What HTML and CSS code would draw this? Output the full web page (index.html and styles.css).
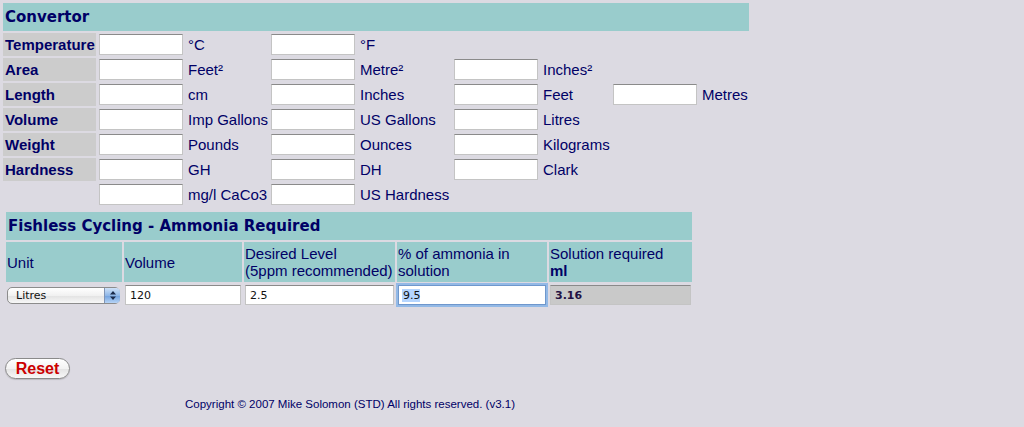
FILE: index.html
```html
<!DOCTYPE html>
<html lang="en">
<head>
    <meta charset="UTF-8">
    <title>Convertor</title>
    <link rel="stylesheet" href="styles.css">
</head>
<body>
    <!-- Unit convertor -->
    <table class="convertor">
        <colgroup>
            <col class="c-label"><col class="c-input"><col class="c-unit1">
            <col class="c-input"><col class="c-unit2"><col class="c-input">
            <col class="c-unit3"><col class="c-input"><col class="c-unit4">
        </colgroup>
        <tr class="title-row"><th colspan="9">Convertor</th></tr>
        <tr>
            <td class="label">Temperature</td>
            <td><input type="text" class="field"></td><td class="unit">°C</td>
            <td><input type="text" class="field"></td><td class="unit">°F</td>
            <td></td><td></td><td></td><td></td>
        </tr>
        <tr>
            <td class="label">Area</td>
            <td><input type="text" class="field"></td><td class="unit">Feet²</td>
            <td><input type="text" class="field"></td><td class="unit">Metre²</td>
            <td><input type="text" class="field"></td><td class="unit">Inches²</td>
            <td></td><td></td>
        </tr>
        <tr>
            <td class="label">Length</td>
            <td><input type="text" class="field"></td><td class="unit">cm</td>
            <td><input type="text" class="field"></td><td class="unit">Inches</td>
            <td><input type="text" class="field"></td><td class="unit">Feet</td>
            <td><input type="text" class="field"></td><td class="unit">Metres</td>
        </tr>
        <tr>
            <td class="label">Volume</td>
            <td><input type="text" class="field"></td><td class="unit">Imp Gallons</td>
            <td><input type="text" class="field"></td><td class="unit">US Gallons</td>
            <td><input type="text" class="field"></td><td class="unit">Litres</td>
            <td></td><td></td>
        </tr>
        <tr>
            <td class="label">Weight</td>
            <td><input type="text" class="field"></td><td class="unit">Pounds</td>
            <td><input type="text" class="field"></td><td class="unit">Ounces</td>
            <td><input type="text" class="field"></td><td class="unit">Kilograms</td>
            <td></td><td></td>
        </tr>
        <tr>
            <td class="label">Hardness</td>
            <td><input type="text" class="field"></td><td class="unit">GH</td>
            <td><input type="text" class="field"></td><td class="unit">DH</td>
            <td><input type="text" class="field"></td><td class="unit">Clark</td>
            <td></td><td></td>
        </tr>
        <tr>
            <td></td>
            <td><input type="text" class="field"></td><td class="unit">mg/l CaCo3</td>
            <td><input type="text" class="field"></td><td class="unit">US Hardness</td>
            <td></td><td></td><td></td><td></td>
        </tr>
    </table>

    <!-- Fishless cycling -->
    <table class="cycling">
        <colgroup>
            <col class="f-unit"><col class="f-volume"><col class="f-level">
            <col class="f-percent"><col class="f-result">
        </colgroup>
        <tr class="title-row"><th colspan="5">Fishless Cycling - Ammonia Required</th></tr>
        <tr class="head-row">
            <td>Unit</td>
            <td>Volume</td>
            <td>Desired Level<br>(5ppm recommended)</td>
            <td>% of ammonia in solution</td>
            <td>Solution required<br><b>ml</b></td>
        </tr>
        <tr class="data-row">
            <td>
                <div class="select-wrap">
                    <select class="unit-select">
                        <option>Litres</option>
                        <option>Imp Gallons</option>
                        <option>US Gallons</option>
                    </select>
                    <span class="select-arrows">
                        <svg width="8" height="11" viewBox="0 0 8 11">
                            <path d="M1 4.5 L4 1 L7 4.5 Z M1 6.5 L4 10 L7 6.5 Z" fill="#1b2a4a"/>
                        </svg>
                    </span>
                </div>
            </td>
            <td><input type="text" class="small-field" value="120"></td>
            <td><input type="text" class="small-field" value="2.5"></td>
            <td><input type="text" class="small-field focused" value="9.5"></td>
            <td><input type="text" class="small-field result" value="3.16" readonly></td>
        </tr>
    </table>

    <button class="reset-btn" type="button">Reset</button>

    <footer class="copyright">
        Copyright © 2007 Mike Solomon (STD) All rights reserved. (v3.1)
    </footer>
</body>
</html>
```

FILE: styles.css
```css
/* Colours */
:root {
    --page-bg: #dcdae2;
    --teal: #99cccc;
    --label-bg: #cccccc;
    --navy: #000066;
}

body {
    margin: 0;
    padding: 1px;
    background: var(--page-bg);
    color: var(--navy);
    font-family: 'Liberation Sans', Arial, sans-serif;
    font-size: 15px;
}

table {
    border-collapse: separate;
    border-spacing: 2px;
    table-layout: fixed;
}

td, th {
    box-sizing: border-box;
    padding: 0 1px;
}

/* Title bars */
.title-row th {
    height: 28px;
    background: var(--teal);
    text-align: left;
    padding: 0 2px;
    font-family: 'DejaVu Sans', Verdana, sans-serif;
    font-size: 15px;
    font-weight: bold;
    color: var(--navy);
}

/* Convertor table */
.convertor {
    width: 750px;
}

.c-label { width: 93px; }
.c-input { width: 86px; }
.c-unit1 { width: 82px; }
.c-unit2 { width: 93px; }
.c-unit3 { width: 69px; }
.c-unit4 { width: 49px; }

.convertor tr {
    height: 23px;
}

.convertor td {
    vertical-align: middle;
    white-space: nowrap;
}

.convertor .label {
    background: var(--label-bg);
    padding: 0 1px 0 2px;
    font-size: 15px;
    font-weight: bold;
}

.convertor .unit {
    padding-left: 2px;
}

.field {
    display: block;
    box-sizing: border-box;
    width: 84px;
    height: 21px;
    margin: 0;
    border: 1px solid #c4c4c4;
    border-top-color: #8a8a8a;
    background: #fff;
}

/* Fishless cycling table */
.cycling {
    width: 690px;
    margin: 2px 0 0 3px;
}

.f-unit { width: 116px; }
.f-volume { width: 118px; }
.f-level { width: 151px; }
.f-percent { width: 150px; }
.f-result { width: 143px; }

.head-row td {
    height: 40px;
    background: var(--teal);
    vertical-align: middle;
    line-height: 17px;
    white-space: nowrap;
}

.head-row td:nth-child(4) {
    white-space: normal;
}

.data-row td {
    height: 22px;
    vertical-align: middle;
}

.select-wrap {
    position: relative;
    height: 17px;
}

.unit-select {
    appearance: none;
    -webkit-appearance: none;
    display: block;
    box-sizing: border-box;
    width: 113px;
    height: 17px;
    margin: 0;
    padding: 0 0 0 8px;
    border: 1px solid #8c8c8c;
    border-radius: 5px;
    background: linear-gradient(#ffffff, #f1f1f1 50%, #e2e2e2 51%, #f7f7f7);
    font-family: 'DejaVu Sans', Verdana, sans-serif;
    font-size: 11px;
    color: #111;
}

.select-arrows {
    position: absolute;
    top: 1px;
    left: 97px;
    width: 15px;
    height: 15px;
    border-left: 1px solid #7f94b5;
    border-radius: 0 4px 4px 0;
    background: linear-gradient(#cfe2f8, #8fb7e8 50%, #6fa0de 51%, #b7d4f6);
    display: flex;
    align-items: center;
    justify-content: center;
}

.small-field {
    display: block;
    box-sizing: border-box;
    width: 100%;
    height: 20px;
    margin: 0;
    padding: 0 4px;
    border: 1px solid #c4c4c4;
    border-top-color: #8a8a8a;
    background: #fff;
    font-family: 'DejaVu Sans', Verdana, sans-serif;
    font-size: 11px;
    color: #111;
}

.small-field.focused {
    border-color: #6f97cc;
    box-shadow: 0 0 0 2px #93b9e6;
    background: linear-gradient(#b5d5fe, #b5d5fe) no-repeat 3px 3px / 18px 13px, #fff;
    outline: none;
}

.small-field.result {
    background: #c9c9c9;
    color: #221144;
    font-weight: bold;
}

/* Reset button */
.reset-btn {
    display: block;
    width: 65px;
    height: 21px;
    margin: 50px 0 0 4px;
    padding: 0;
    border: 1px solid #8a8a8a;
    border-radius: 11px;
    background: linear-gradient(#ffffff, #f3f3f3 50%, #e3e3e3 51%, #f8f8f8);
    font-family: 'Liberation Sans', Arial, sans-serif;
    font-size: 16px;
    font-weight: bold;
    color: #cc0000;
    box-shadow: 0 1px 1px rgba(0, 0, 0, 0.15);
}

/* Footer */
.copyright {
    width: 690px;
    margin: 18px 0 0 4px;
    text-align: center;
    font-size: 11.5px;
    line-height: 14px;
}
```
